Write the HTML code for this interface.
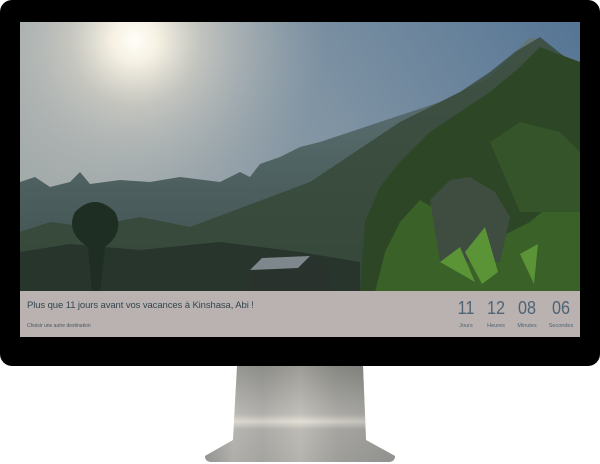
<!DOCTYPE html>
<html><head><meta charset="utf-8"><style>
html,body{margin:0;padding:0;background:#fff;width:600px;height:464px;overflow:hidden;font-family:"Liberation Sans",sans-serif}
.bez{position:absolute;left:0;top:0;width:600px;height:366px;background:#000;border-radius:12px}
.scr{position:absolute;left:20px;top:22px;width:560px;height:315px;overflow:hidden}
.bar{position:absolute;left:20px;top:291px;width:560px;height:46px;background:#b9b2b0}
.t1{position:absolute;left:7px;top:9px;font-size:9.5px;color:#34454f;letter-spacing:-0.1px}
.t2{position:absolute;left:7px;top:32px;font-size:5px;color:#4a5560}
.cd{position:absolute;top:7px;width:40px;text-align:center;color:#4e6475}
.cd b{display:block;font-weight:normal;font-size:18px;line-height:20px;transform:scaleX(0.9)}
.cd i{display:block;font-style:normal;font-size:5.5px;margin-top:5px}
</style></head><body>
<svg style="position:absolute;left:0;top:0" width="600" height="464">
<defs>
<linearGradient id="st" x1="0" x2="1" y1="0" y2="0">
<stop offset="0" stop-color="#8a8a87"/><stop offset="0.15" stop-color="#c8c6c0"/><stop offset="0.3" stop-color="#b0afab"/><stop offset="0.5" stop-color="#d6d3ca"/><stop offset="0.7" stop-color="#a2a19d"/><stop offset="1" stop-color="#858582"/>
</linearGradient>
<linearGradient id="sv" x1="0" x2="0" y1="0" y2="1">
<stop offset="0" stop-color="#6f706c"/><stop offset="0.5" stop-color="#b0afab"/><stop offset="0.58" stop-color="#eeeae0"/><stop offset="0.66" stop-color="#a8a7a3"/><stop offset="1" stop-color="#9a9a97"/>
</linearGradient>
</defs>
<path d="M237 366 L363 366 L366 440 L395 456 Q395 462 388 462 L212 462 Q205 462 205 456 L233 440 Z" fill="url(#st)"/>
<path d="M237 366 L363 366 L366 440 L395 456 Q395 462 388 462 L212 462 Q205 462 205 456 L233 440 Z" fill="url(#sv)" opacity="0.55"/>
</svg>
<div class="bez"></div>
<div class="scr">
<svg width="560" height="270">
<defs>
<linearGradient id="sky" x1="0" x2="1" y1="0.3" y2="0">
<stop offset="0" stop-color="#a3aaa9"/><stop offset="0.5" stop-color="#7f93a3"/><stop offset="1" stop-color="#557595"/>
</linearGradient>
<radialGradient id="sun" cx="115" cy="18" r="190" gradientUnits="userSpaceOnUse">
<stop offset="0" stop-color="#fffef8"/><stop offset="0.12" stop-color="#f6f1e3"/><stop offset="0.35" stop-color="#cfcdc4" stop-opacity="0.8"/><stop offset="1" stop-color="#a0aab0" stop-opacity="0"/>
</radialGradient>
<linearGradient id="haze" x1="0" x2="0" y1="0" y2="1">
<stop offset="0" stop-color="#62777a"/><stop offset="1" stop-color="#3e4f4c"/>
</linearGradient>
</defs>
<rect width="560" height="270" fill="url(#sky)"/>
<rect width="560" height="270" fill="url(#sun)"/>
<path d="M0 160 L15 155 L30 165 L50 160 L60 150 L70 162 L100 158 L130 160 L160 155 L200 160 L220 150 L230 155 L240 142 L260 135 L280 125 L300 120 L330 110 L360 100 L390 90 L420 80 L440 70 L470 55 L490 35 L510 15 L525 20 L545 40 L560 40 L560 270 L0 270 Z" fill="url(#haze)"/>
<path d="M0 210 L30 200 L70 205 L120 195 L170 205 L210 190 L250 175 L290 160 L320 140 L350 120 L380 100 L410 85 L440 70 L470 50 L495 30 L520 15 L545 35 L560 40 L560 270 L0 270 Z" fill="#334633" opacity="0.75"/>
<path d="M340 270 L345 200 L360 165 L380 140 L410 110 L440 90 L470 70 L500 45 L520 25 L560 40 L560 270 Z" fill="#2d4626"/>
<path d="M355 270 L365 230 L380 200 L400 178 L420 190 L430 230 L470 220 L510 200 L540 175 L560 170 L560 270 Z" fill="#3a6228"/>
<path d="M470 120 L500 100 L540 110 L560 130 L560 190 L500 190 Z" fill="#35542a"/>
<path d="M0 230 L50 222 L120 228 L200 220 L280 230 L340 240 L340 270 L0 270 Z" fill="#27352d"/>
<path d="M55 190 Q75 170 95 190 Q105 210 85 225 L80 270 L72 270 L68 225 Q45 210 55 190 Z" fill="#1f2e22"/>
<path d="M410 178 L430 158 L450 155 L475 170 L490 195 L480 240 L420 240 Z" fill="#3f4c40"/>
<path d="M230 248 L242 236 L290 234 L310 250 L310 270 L230 270 Z" fill="#2a322e"/>
<path d="M230 248 L242 236 L290 234 L278 246 Z" fill="#7e888c"/>
<path d="M445 230 L465 205 L478 250 L462 262 Z M500 232 L518 222 L514 262 Z M420 240 L440 225 L455 260 Z" fill="#5a9436"/>
</svg>
</div>
<div class="bar">
<div class="t1">Plus que 11 jours avant vos vacances à Kinshasa, Abi !</div>
<div class="t2">Choisir une autre destination</div>
<div class="cd" style="left:426px"><b>11</b><i>Jours</i></div>
<div class="cd" style="left:456px"><b>12</b><i>Heures</i></div>
<div class="cd" style="left:487px"><b>08</b><i>Minutes</i></div>
<div class="cd" style="left:521px"><b>06</b><i>Secondes</i></div>
</div>
</body></html>
